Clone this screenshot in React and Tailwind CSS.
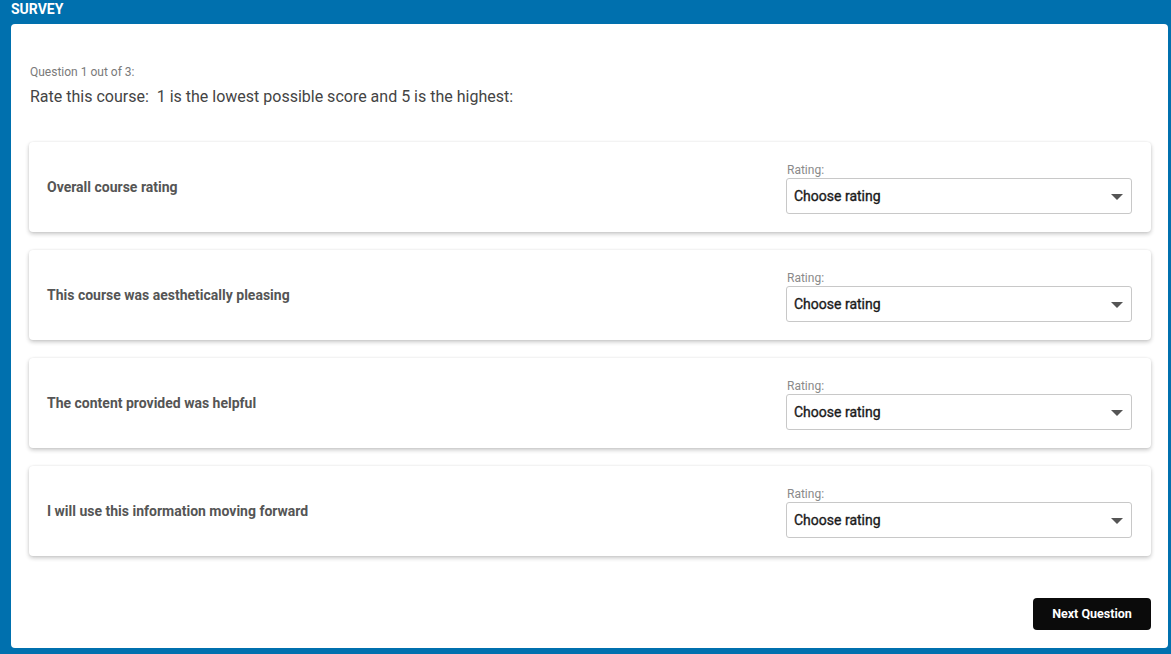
import { useState } from 'react';

const questions = [
    'Overall course rating',
    'This course was aesthetically pleasing',
    'The content provided was helpful',
    'I will use this information moving forward',
];

function RatingCard({ label }) {
    const [value, setValue] = useState('');
    return (
        <div className="flex h-[90px] justify-between rounded-[4px] bg-white pl-[18px] pr-[19px] shadow-[0_2px_4px_rgba(0,0,0,0.22),0_0_2px_rgba(0,0,0,0.08)]">
            <div className="self-center pt-[1px] text-[14px] font-bold text-[#555555]">{label}</div>
            <div className="flex w-[346px] flex-col pt-[21px]">
                <div className="pl-[1px] text-[12px] leading-[15px] text-[#8a8a8a]">Rating:</div>
                <div className="relative h-[36px] rounded-[3px] border border-[#c8c8c8] bg-white">
                    <select
                        value={value}
                        onChange={(e) => setValue(e.target.value)}
                        className="h-full w-full appearance-none bg-transparent pl-[7px] text-[14px] font-normal text-[#1a1a1a] outline-none [-webkit-text-stroke:0.35px_#1a1a1a]"
                    >
                        <option value="">Choose rating</option>
                        {[1, 2, 3, 4, 5].map(n => (
                            <option key={n} value={n}>{n}</option>
                        ))}
                    </select>
                    <svg className="pointer-events-none absolute right-[8px] top-[15px]" width="12" height="6" viewBox="0 0 12 6">
                        <path d="M0 0 L12 0 L6 6 Z" fill="#555555" />
                    </svg>
                </div>
            </div>
        </div>
    );
}

export default function App() {
    return (
        <div className="flex h-[654px] w-[1171px] flex-col bg-[#0070ae] font-['Roboto',sans-serif]">
            <div className="h-[24px] pl-[11px] pt-[1px] text-[14px] font-bold leading-[16px] text-white">SURVEY</div>
            <div className="ml-[11px] mr-[3px] flex h-[624px] flex-col rounded-[4px] bg-white pl-[18px] pr-[17px]">
                <div className="pl-[1px] pt-[40px] text-[12px] leading-[16px] text-[#7a7a7a]">Question 1 out of 3:</div>
                <div className="mt-[7px] pl-[1px] text-[16px] leading-[20px] text-[#444444]">Rate this course:&nbsp; 1 is the lowest possible score and 5 is the highest:</div>
                <div className="mt-[35px] flex flex-col gap-[18px]">
                    {questions.map(q => (
                        <RatingCard key={q} label={q} />
                    ))}
                </div>
                <div className="mt-[42px] flex justify-end">
                    <button className="h-[32px] w-[118px] rounded-[4px] bg-[#0b0b0b] text-[12.5px] font-bold text-white">Next Question</button>
                </div>
            </div>
        </div>
    );
}
